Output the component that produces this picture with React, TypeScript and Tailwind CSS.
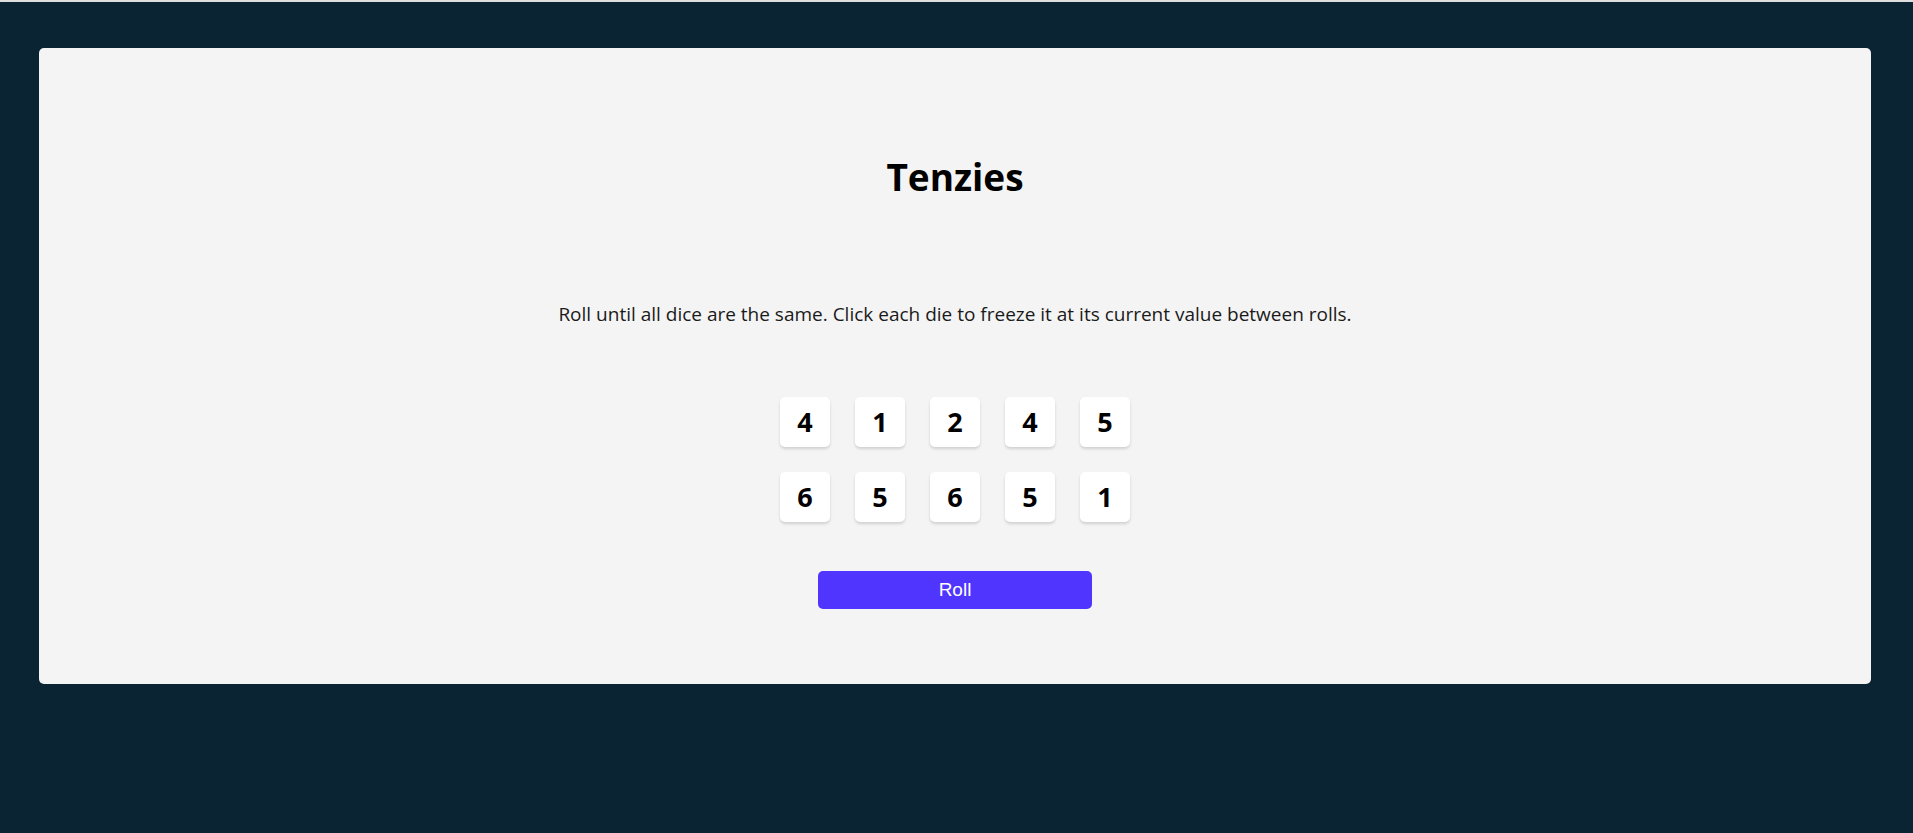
const dice = [4, 1, 2, 4, 5, 6, 5, 6, 5, 1]

function Die({ value }: { value: number }) {
  return (
    <button className="flex h-[50px] w-[50px] items-center justify-center rounded-[5px] bg-white text-[27px] font-bold text-black shadow-[0_2px_3px_rgba(0,0,0,0.15)]">
      {value}
    </button>
  )
}

export default function App() {
  return (
    <div className="min-h-screen border-t-2 border-[#dedede] bg-[#0b2434] pb-[150px] pl-[39px] pr-[42px] pt-[46px] font-['Open_Sans',sans-serif]">
      <main className="flex flex-col items-center rounded-[5px] bg-[#f4f4f4] pb-[75px] pt-[105px]">
        <h1 className="text-[37px] font-bold leading-[48px] text-black">Tenzies</h1>
        <p className="mt-[101px] text-[19px] leading-[24px] text-[#1a1a1a]">
          Roll until all dice are the same. Click each die to freeze it at its current value between rolls.
        </p>
        <div className="mt-[71px] grid grid-cols-5 gap-[25px]">
          {dice.map((d, i) => (
            <Die key={i} value={d} />
          ))}
        </div>
        <button className="mt-[49px] h-[38px] w-[274px] rounded-[5px] bg-[#5035ff] font-['Liberation_Sans',Arial,sans-serif] text-[19px] text-white">
          Roll
        </button>
      </main>
    </div>
  )
}
